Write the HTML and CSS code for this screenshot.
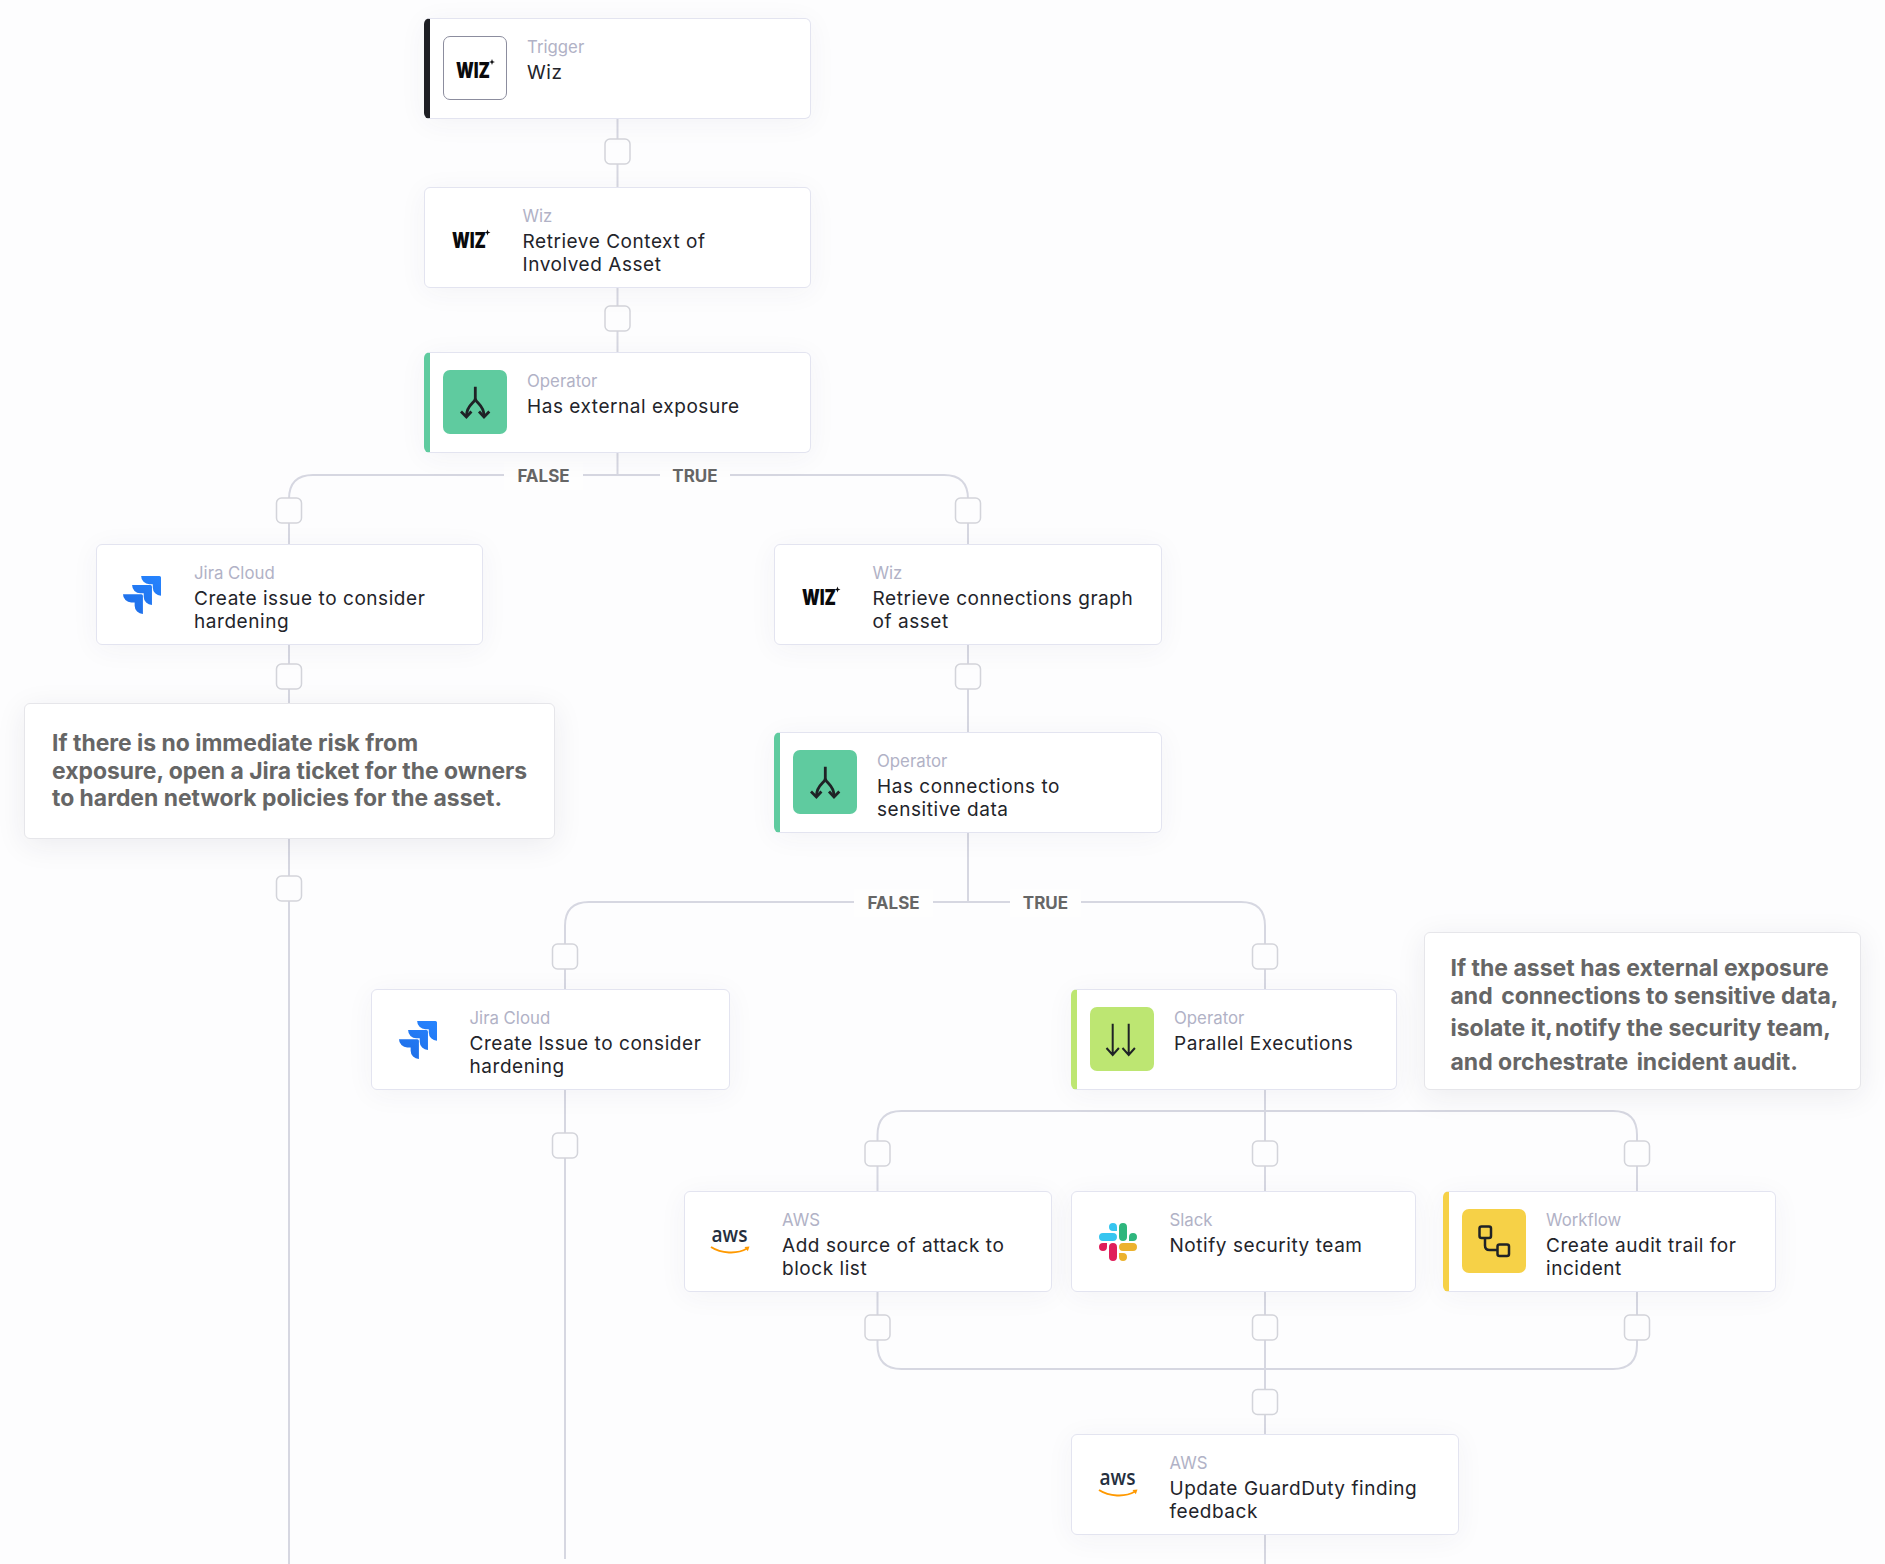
FILE: index.html
```html
<!DOCTYPE html>
<html lang="en">
<head>
<meta charset="utf-8">
<title>Workflow</title>
<link rel="stylesheet" href="styles.css">
</head>
<body>
<main class="canvas">
  <svg class="wires" width="1885" height="1564" viewBox="0 0 1885 1564">
    <g class="wire">
      <path d="M617.5 118V353"/>
      <path d="M617.5 453V475"/>
      <path d="M289 1564V499Q289 475 313 475H944Q968 475 968 499V732"/>
      <path d="M968 832V902"/>
      <path d="M565 1559V926Q565 902 589 902H1241Q1265 902 1265 926V989"/>
      <path d="M1265 1089V1434"/>
      <path d="M877.5 1191V1135Q877.5 1111 901.500 1111H1613Q1637 1111 1637 1135V1191"/>
      <path d="M877.5 1291V1345Q877.5 1369 901.500 1369H1613Q1637 1369 1637 1345V1291"/>
      <path d="M1265 1534V1564"/>
    </g>
    <g class="stub">
      <rect x="605" y="139" width="25" height="25" rx="5"/>
      <rect x="605" y="306" width="25" height="25" rx="5"/>
      <rect x="276.500" y="498" width="25" height="25" rx="5"/>
      <rect x="955.500" y="498" width="25" height="25" rx="5"/>
      <rect x="276.500" y="664" width="25" height="25" rx="5"/>
      <rect x="955.500" y="664" width="25" height="25" rx="5"/>
      <rect x="276.500" y="876" width="25" height="25" rx="5"/>
      <rect x="552.500" y="944" width="25" height="25" rx="5"/>
      <rect x="1252.500" y="944" width="25" height="25" rx="5"/>
      <rect x="552.500" y="1133" width="25" height="25" rx="5"/>
      <rect x="865" y="1141" width="25" height="25" rx="5"/>
      <rect x="1252.500" y="1141" width="25" height="25" rx="5"/>
      <rect x="1624.500" y="1141" width="25" height="25" rx="5"/>
      <rect x="865" y="1315" width="25" height="25" rx="5"/>
      <rect x="1252.500" y="1315" width="25" height="25" rx="5"/>
      <rect x="1624.500" y="1315" width="25" height="25" rx="5"/>
      <rect x="1252.500" y="1389.500" width="25" height="25" rx="5"/>
    </g>
  </svg>

  <span class="branch b-false-1">FALSE</span>
  <span class="branch b-true-1">TRUE</span>
  <span class="branch b-false-2">FALSE</span>
  <span class="branch b-true-2">TRUE</span>

  <article class="card accented accent-dark n-trigger">
    <div class="tile tile-outline">
      <svg width="64" height="64" viewBox="0 0 64 64"><text class="wiz" x="13" y="42" textLength="34" lengthAdjust="spacingAndGlyphs">WIZ</text><path class="wiz-star" d="M49 23l.8 2.200 2.200.8-2.200.8-.8 2.200-.8-2.200-2.200-.8 2.200-.8z"/></svg>
    </div>
    <div class="copy"><p class="kind">Trigger</p><p class="title">Wiz</p></div>
  </article>

  <article class="card n-wiz1">
    <div class="logo">
      <svg width="38" height="38" viewBox="0 0 38 38"><text class="wiz" x="0" y="29" textLength="34" lengthAdjust="spacingAndGlyphs">WIZ</text><path class="wiz-star" d="M35.500 10.500l.8 2.200 2.200.8-2.200.8-.8 2.200-.8-2.200-2.200-.8 2.200-.8z"/></svg>
    </div>
    <div class="copy"><p class="kind">Wiz</p><p class="title">Retrieve Context of<br>Involved Asset</p></div>
  </article>

  <article class="card accented accent-green n-op1">
    <div class="tile tile-green">
      <svg width="64" height="64" viewBox="0 0 64 64" class="glyph fork"><path d="M32.300 16.700V28.500C32.300 33 23.500 34.500 23.500 46"/><path d="M32.300 28.500C32.300 33 41 34.500 41 46"/><path d="M18 41.500l5.400 5.500 5-5.500M36 41.500l5 5.500 5.300-5.500"/></svg>
    </div>
    <div class="copy"><p class="kind">Operator</p><p class="title">Has external exposure</p></div>
  </article>

  <article class="card n-jira1">
    <div class="logo">
      <svg width="38" height="38" viewBox="0 0 24 24"><defs><linearGradient id="jg" x1="1" y1="0" x2="0.300" y2="1"><stop offset="0" stop-color="#2684ff"/><stop offset="1" stop-color="#1f6fe8"/></linearGradient></defs><path fill="url(#jg)" d="M11.571 11.513H0a5.218 5.218 0 0 0 5.232 5.215h2.13v2.057A5.215 5.215 0 0 0 12.575 24V12.518a1.005 1.005 0 0 0-1.005-1.005zm5.723-5.756H5.736a5.215 5.215 0 0 0 5.215 5.214h2.129v2.058a5.218 5.218 0 0 0 5.215 5.214V6.758a1.001 1.001 0 0 0-1.001-1.001zM23.013 0H11.455a5.215 5.215 0 0 0 5.215 5.215h2.129v2.057A5.215 5.215 0 0 0 24 12.483V1.005A1.001 1.001 0 0 0 23.013 0z"/></svg>
    </div>
    <div class="copy"><p class="kind">Jira Cloud</p><p class="title">Create issue to consider<br>hardening</p></div>
  </article>

  <article class="card n-wiz2">
    <div class="logo">
      <svg width="38" height="38" viewBox="0 0 38 38"><text class="wiz" x="0" y="29" textLength="34" lengthAdjust="spacingAndGlyphs">WIZ</text><path class="wiz-star" d="M35.500 10.500l.8 2.200 2.200.8-2.200.8-.8 2.200-.8-2.200-2.200-.8 2.200-.8z"/></svg>
    </div>
    <div class="copy"><p class="kind">Wiz</p><p class="title">Retrieve connections graph<br>of asset</p></div>
  </article>

  <aside class="note n-note1">
    <p class="note-line">If there is no immediate risk from</p>
    <p class="note-line">exposure, open a Jira ticket for the owners</p>
    <p class="note-line">to harden network policies for the asset.</p>
  </aside>

  <article class="card accented accent-green n-op2">
    <div class="tile tile-green">
      <svg width="64" height="64" viewBox="0 0 64 64" class="glyph fork"><path d="M32.300 16.700V28.500C32.300 33 23.500 34.500 23.500 46"/><path d="M32.300 28.500C32.300 33 41 34.500 41 46"/><path d="M18 41.500l5.400 5.500 5-5.500M36 41.500l5 5.500 5.300-5.500"/></svg>
    </div>
    <div class="copy"><p class="kind">Operator</p><p class="title">Has connections to<br>sensitive data</p></div>
  </article>

  <article class="card n-jira2">
    <div class="logo">
      <svg width="38" height="38" viewBox="0 0 24 24"><path fill="url(#jg)" d="M11.571 11.513H0a5.218 5.218 0 0 0 5.232 5.215h2.13v2.057A5.215 5.215 0 0 0 12.575 24V12.518a1.005 1.005 0 0 0-1.005-1.005zm5.723-5.756H5.736a5.215 5.215 0 0 0 5.215 5.214h2.129v2.058a5.218 5.218 0 0 0 5.215 5.214V6.758a1.001 1.001 0 0 0-1.001-1.001zM23.013 0H11.455a5.215 5.215 0 0 0 5.215 5.215h2.129v2.057A5.215 5.215 0 0 0 24 12.483V1.005A1.001 1.001 0 0 0 23.013 0z"/></svg>
    </div>
    <div class="copy"><p class="kind">Jira Cloud</p><p class="title">Create Issue to consider<br>hardening</p></div>
  </article>

  <article class="card accented accent-lime n-parallel">
    <div class="tile tile-lime">
      <svg width="64" height="64" viewBox="0 0 64 64" class="glyph thin"><path d="M22.700 16.700V48M16.500 41l6.200 7 6.200-7M38.700 16.700V48M32.500 41l6.200 7 6.200-7"/></svg>
    </div>
    <div class="copy"><p class="kind">Operator</p><p class="title">Parallel Executions</p></div>
  </article>

  <aside class="note n-note2">
    <p class="note-line">If the asset has external exposure</p>
    <p class="note-line l2">and <span class="wide-gap">connections to sensitive data,</span></p>
    <p class="note-line l3">isolate it,<span class="tight-gap">notify the security team,</span></p>
    <p class="note-line l4">and orchestrate <span class="wide-gap">incident audit.</span></p>
  </aside>

  <article class="card n-aws1">
    <div class="logo">
      <svg width="40" height="38" viewBox="0 0 40 38"><text class="aws" x="0.500" y="19" textLength="36" lengthAdjust="spacingAndGlyphs">aws</text><path class="smile" d="M0 24C10 30.500 26 31.500 36 25.500"/><path class="smile-tip" d="M33.500 24l5-.6-1.700 4.800z"/></svg>
    </div>
    <div class="copy"><p class="kind">AWS</p><p class="title">Add source of attack to<br>block list</p></div>
  </article>

  <article class="card n-slack">
    <div class="logo">
      <svg width="38" height="38" viewBox="0 0 24 24"><path fill="#e01e5a" d="M5.042 15.165a2.528 2.528 0 0 1-2.52 2.523A2.528 2.528 0 0 1 0 15.165a2.527 2.527 0 0 1 2.522-2.52h2.52v2.52zM6.313 15.165a2.527 2.527 0 0 1 2.521-2.52 2.527 2.527 0 0 1 2.521 2.52v6.313A2.528 2.528 0 0 1 8.834 24a2.528 2.528 0 0 1-2.521-2.522v-6.313z"/><path fill="#36c5f0" d="M8.834 5.042a2.528 2.528 0 0 1-2.521-2.52A2.528 2.528 0 0 1 8.834 0a2.528 2.528 0 0 1 2.521 2.522v2.52H8.834zM8.834 6.313a2.528 2.528 0 0 1 2.521 2.521 2.528 2.528 0 0 1-2.521 2.521H2.522A2.528 2.528 0 0 1 0 8.834a2.528 2.528 0 0 1 2.522-2.521h6.312z"/><path fill="#2eb67d" d="M18.956 8.834a2.528 2.528 0 0 1 2.522-2.521A2.528 2.528 0 0 1 24 8.834a2.528 2.528 0 0 1-2.522 2.521h-2.522V8.834zM17.688 8.834a2.528 2.528 0 0 1-2.523 2.521 2.527 2.527 0 0 1-2.52-2.521V2.522A2.527 2.527 0 0 1 15.165 0a2.528 2.528 0 0 1 2.523 2.522v6.312z"/><path fill="#ecb22e" d="M15.165 18.956a2.528 2.528 0 0 1 2.523 2.522A2.528 2.528 0 0 1 15.165 24a2.527 2.527 0 0 1-2.52-2.522v-2.522h2.52zM15.165 17.688a2.527 2.527 0 0 1-2.52-2.523 2.526 2.526 0 0 1 2.52-2.52h6.313A2.527 2.527 0 0 1 24 15.165a2.528 2.528 0 0 1-2.522 2.523h-6.313z"/></svg>
    </div>
    <div class="copy"><p class="kind">Slack</p><p class="title">Notify security team</p></div>
  </article>

  <article class="card accented accent-yellow n-flow">
    <div class="tile tile-yellow">
      <svg width="64" height="64" viewBox="0 0 64 64" class="glyph"><rect x="17.500" y="17.500" width="11.500" height="11.500" rx="2"/><rect x="35.500" y="35.500" width="11.500" height="11.500" rx="2"/><path d="M23 29V36.500Q23 41 27.500 41H35.500"/></svg>
    </div>
    <div class="copy"><p class="kind">Workflow</p><p class="title">Create audit trail for<br>incident</p></div>
  </article>

  <article class="card n-aws2">
    <div class="logo">
      <svg width="40" height="38" viewBox="0 0 40 38"><text class="aws" x="0.500" y="19" textLength="36" lengthAdjust="spacingAndGlyphs">aws</text><path class="smile" d="M0 24C10 30.500 26 31.500 36 25.500"/><path class="smile-tip" d="M33.500 24l5-.6-1.700 4.800z"/></svg>
    </div>
    <div class="copy"><p class="kind">AWS</p><p class="title">Update GuardDuty finding<br>feedback</p></div>
  </article>
</main>
</body>
</html>
```

FILE: styles.css
```css
* { box-sizing: border-box; }

html, body {
  margin: 0;
  background: #fdfdfe;
}

.canvas {
  position: relative;
  width: 1885px;
  height: 1564px;
  overflow: hidden;
  font-family: Inter, "Liberation Sans", sans-serif;
}

.wires {
  position: absolute;
  left: 0;
  top: 0;
}

.wire path {
  fill: none;
  stroke: #d6d7e1;
  stroke-width: 2;
}

.stub rect {
  fill: #fdfdfe;
  stroke: #d3d4da;
  stroke-width: 1.5;
}

/* Nodes on the free canvas */
.card {
  position: absolute;
  display: flex;
  align-items: center;
  height: 101px;
  padding-left: 26.500px;
  background: #fff;
  border: 1.5px solid #e3e4f0;
  border-radius: 6px;
  box-shadow: 0 4px 28px rgba(50, 50, 90, .05);
  overflow: hidden;
}

.card.accented {
  padding-left: 13px;
  border-left: 6px solid;
}

.accent-dark { border-left-color: #1e1f24 !important; }
.accent-green { border-left-color: #5fcb9f !important; }
.accent-lime { border-left-color: #bde672 !important; }
.accent-yellow { border-left-color: #f6d147 !important; }

.n-trigger { left: 424px; top: 18px; width: 387px; }
.n-wiz1 { left: 424px; top: 187px; width: 387px; }
.n-op1 { left: 424px; top: 352px; width: 387px; }
.n-jira1 { left: 95.500px; top: 544px; width: 387.500px; }
.n-wiz2 { left: 774px; top: 544px; width: 388px; }
.n-op2 { left: 774px; top: 732px; width: 388px; }
.n-jira2 { left: 371px; top: 989px; width: 359px; }
.n-parallel { left: 1071px; top: 989px; width: 326px; }
.n-aws1 { left: 683.500px; top: 1191px; width: 368.500px; }
.n-slack { left: 1071px; top: 1191px; width: 345px; }
.n-flow { left: 1443px; top: 1191px; width: 333px; }
.n-aws2 { left: 1071px; top: 1434px; width: 388px; }

.tile {
  flex: none;
  width: 64px;
  height: 64px;
  margin: -1px 20px 0 0;
  border-radius: 7px;
}

.tile svg { display: block; }

.tile-outline {
  border: 1.5px solid #8c8d9e;
}

.tile-outline svg { margin: -1.5px; }

.tile-green { background: #5fcb9f; }
.tile-lime { background: #bde672; }
.tile-yellow { background: #f6d147; }

.logo {
  flex: none;
  width: 38px;
  height: 38px;
  margin-right: 33px;
}

.logo svg { display: block; overflow: visible; }

.copy {
  align-self: flex-start;
  padding-top: 18px;
}

.kind {
  margin: 0 0 5px;
  font-size: 16.800px;
  line-height: 20px;
  color: #b1b2c6;
}

.title {
  margin: 0;
  font-size: 19px;
  line-height: 22.500px;
  letter-spacing: .55px;
  color: #23242a;
  white-space: nowrap;
}

/* Logo artwork */
.wiz {
  font-family: Inter, sans-serif;
  font-size: 21px;
  font-weight: 900;
  fill: #0a0a0c;
}

.wiz-star { fill: #0a0a0c; }

.aws {
  font-family: "Open Sans", sans-serif;
  font-size: 22px;
  font-weight: 600;
  fill: #252f3e;
}

.smile {
  fill: none;
  stroke: #f90;
  stroke-width: 2;
}

.smile-tip { fill: #f90; }

.glyph path, .glyph rect {
  fill: none;
  stroke: #1f2226;
  stroke-width: 2.500;
}

.glyph.fork path { stroke-width: 2.800; }
.glyph.thin path { stroke-width: 2; }

/* Branch labels */
.branch {
  position: absolute;
  display: flex;
  align-items: center;
  justify-content: center;
  height: 28px;
  background: #fefefe;
  font-size: 17px;
  font-weight: 700;
  color: #666;
}

.b-false-1 { left: 504px; top: 461.500px; width: 79px; }
.b-true-1 { left: 660px; top: 461.500px; width: 70px; }
.b-false-2 { left: 854px; top: 888.500px; width: 79px; }
.b-true-2 { left: 1010px; top: 888.500px; width: 71px; }

/* Annotations */
.note {
  position: absolute;
  background: #fff;
  border: 1.5px solid #e6e6ea;
  border-radius: 6px;
  box-shadow: 0 6px 30px rgba(40, 40, 60, .08);
  color: #666;
  font-weight: 700;
}

.note-line {
  margin: 0;
  white-space: nowrap;
}

.n-note1 {
  left: 23.500px;
  top: 702.500px;
  width: 531.500px;
  height: 136.500px;
  padding: 26.500px 0 0 27.500px;
  font-size: 22.900px;
  line-height: 27.700px;
}

.n-note2 {
  left: 1423.500px;
  top: 932px;
  width: 437.500px;
  height: 158px;
  padding: 22px 0 0 26px;
  font-size: 23px;
  line-height: 27.700px;
}

.l2 { margin-top: .5px; }
.l3 { margin-top: 4px; }
.l4 { margin-top: 6px; }

.wide-gap { margin-left: 3px; }
.tight-gap { margin-left: 2px; }
```
